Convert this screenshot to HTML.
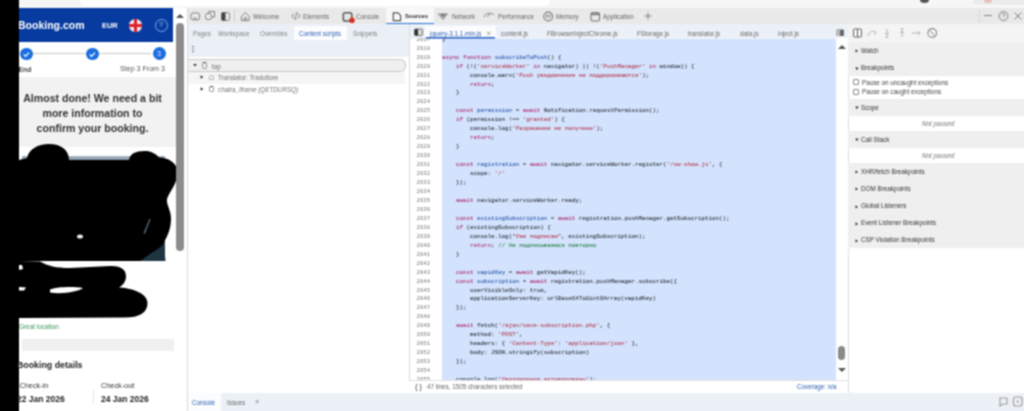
<!DOCTYPE html>
<html><head><meta charset="utf-8">
<style>
*{margin:0;padding:0;box-sizing:border-box}
html,body{width:1024px;height:411px;overflow:hidden;background:#fff;font-family:"Liberation Sans",sans-serif}
.a{position:absolute}
.t{position:absolute;white-space:pre;font-size:6.3px;color:#666;line-height:1}
#code{-webkit-text-stroke:0.12px currentColor;position:absolute;left:33px;top:0;font-family:"Liberation Mono",monospace;font-size:5.85px;line-height:9px;white-space:pre;color:#3c414c}
#nums{position:absolute;left:0px;top:0;width:21px;font-family:"Liberation Mono",monospace;font-size:5.6px;line-height:9px;white-space:pre;color:#7a7a7a;text-align:right}
.k{color:#b03a7a}.s{color:#b8485e}.v{color:#3a62b0}.c{color:#3a8a5a}
.sh{position:absolute;left:848px;width:176px;height:17px;background:#efefef}
</style></head><body><svg width="0" height="0" style="position:absolute"><filter id="bl" x="0" y="0" width="100%" height="100%" color-interpolation-filters="sRGB"><feConvolveMatrix order="3" kernelMatrix="1 2 1 2 4 2 1 2 1" divisor="16" edgeMode="duplicate"/></filter></svg><div id="root" style="position:absolute;left:0;top:0;width:1024px;height:411px;overflow:hidden;filter:url(#bl)">
<!-- top strip -->
<div class="a" style="left:0;top:0;width:1024px;height:8px;background:#f6f6f6"></div>
<div class="a" style="left:80px;top:0;width:470px;height:6px;background:#fff;border-radius:0 0 6px 6px"></div>
<div class="a" style="left:920px;top:-3px;width:9px;height:6px;border-radius:50%;background:#555"></div>
<div class="a" style="left:973px;top:-4px;width:60px;height:9px;border-radius:5px;background:#ececec"></div>
<div class="a" style="left:984px;top:-2px;width:8px;height:5px;border-radius:50%;background:#e8c0b8"></div>

<!-- booking page -->
<div class="a" style="left:19px;top:8px;width:169px;height:403px;background:#fff"></div>
<div class="a" style="left:19px;top:8px;width:154px;height:34px;background:#073b9f"></div>
<div class="t" style="left:18px;top:19.8px;font-size:10.5px;font-weight:700;color:#fff">Booking.com</div>
<div class="t" style="left:102px;top:21.8px;font-size:7.4px;font-weight:700;color:#fff">EUR</div>
<div class="a" style="left:129px;top:19px;width:12.5px;height:12.5px;border-radius:50%;background:#f6dde0;overflow:hidden">
  <div class="a" style="left:4.5px;top:0;width:3.5px;height:13px;background:#dc2430"></div>
  <div class="a" style="left:0;top:4.5px;width:13px;height:3.5px;background:#dc2430"></div>
</div>
<div class="a" style="left:154.5px;top:18.5px;width:13.5px;height:13.5px;border-radius:50%;border:1.6px solid #80aaf2"></div>
<div class="t" style="left:158.8px;top:21px;font-size:8px;color:#a9c5f4">?</div>

<!-- steps -->
<div class="a" style="left:33px;top:53px;width:52px;height:1px;background:#c8c8c8"></div>
<div class="a" style="left:99px;top:53px;width:52px;height:1px;background:#c8c8c8"></div>
<div class="a" style="left:20px;top:47.5px;width:12.5px;height:12.5px;border-radius:50%;background:#1a6ee0"></div>
<div class="a" style="left:86px;top:47.5px;width:12.5px;height:12.5px;border-radius:50%;background:#1a6ee0"></div>
<div class="a" style="left:152.5px;top:47px;width:13px;height:13px;border-radius:50%;background:#1a6ee0"></div>
<svg class="a" style="left:20px;top:47.5px" width="13" height="13"><path d="M3.8 6.5 L5.6 8.3 L9 4.6" stroke="#fff" stroke-width="1.2" fill="none"/></svg>
<svg class="a" style="left:86px;top:47.5px" width="13" height="13"><path d="M3.8 6.5 L5.6 8.3 L9 4.6" stroke="#fff" stroke-width="1.2" fill="none"/></svg>
<div class="t" style="left:157px;top:49.5px;font-size:7px;color:#dce8fb">3</div>
<div class="t" style="left:18.5px;top:66.5px;font-size:6.8px;font-weight:700;color:#444">End</div>
<div class="t" style="left:120px;top:66px;font-size:7.1px;color:#555">Step 3 From 3</div>

<!-- almost done box -->
<div class="a" style="left:19px;top:77px;width:157px;height:70px;background:#f2f2f2"></div>
<div class="a" style="left:9px;top:91px;width:167px;text-align:center;font-size:10.6px;font-weight:700;color:#333;line-height:15px">Almost done! We need a bit<br>more information to<br>confirm your booking.</div>

<!-- photo + scribble -->
<div class="a" style="left:22px;top:155.5px;width:143px;height:105.5px;background:linear-gradient(#a9b8c6,#3a5060 12%,#1f3441)"></div>
<svg class="a" style="left:0;top:0" width="188" height="411">
  <g fill="#000">
    <rect x="0" y="0" width="19" height="411"/>
    <path d="M19 160 L27 158 C29 149 38 144 49 144 C61 144 69 150 69 160 L129 160 C130 153 137 150.5 147 151 C152 151.5 156 154 159 157.5 C166 157 177.5 162 177.5 172 C177.5 184 170 190 167 199 C166 205 171.5 210 171 220 C170.5 232 166 238 163 244 L165 261 L19 261 Z"/>
    <path d="M19 261 L40 261.5 C48 266 56 268 70 268 L110 266 C121 265.5 126.5 270 126 277 C125.5 282 123 285 119 287.5 C128 287.5 147.5 292 147.5 303 C147.5 313 139 317.5 125 317.5 L19 318 Z"/>
  </g>
  <g fill="#fff">
    <path d="M50 289.5 C58 286.5 74 286.5 83 288 C79 291.5 62 294.5 50 292.5 Z"/>
    <path d="M19 287 L26 287.5 L24 290.5 L19 290.5 Z"/>
    <path d="M19 265 L22 265 L23 269 L19 270 Z"/>
  </g>
  <path d="M150 254 C156 250 161 247 164 244 L165.5 261 L140 261 Z" fill="#1f3441"/>
  <ellipse cx="80" cy="236.5" rx="3" ry="2" fill="#e8eef2"/>
  <path d="M143.5 233 L149.5 218.5 L150.5 219.5 L145 234 Z" fill="#8aa0b0" opacity="0.6"/>
</svg>

<div class="t" style="left:19px;top:324px;font-size:6.4px;color:#3a9a5a">Great location</div>
<div class="a" style="left:22px;top:339px;width:152px;height:12px;background:#f0f0f0"></div>
<div class="t" style="left:17px;top:360.5px;font-size:8.8px;font-weight:700;color:#222">Booking details</div>
<div class="t" style="left:19.5px;top:382px;font-size:7.3px;color:#333">Check-in</div>
<div class="t" style="left:101px;top:382px;font-size:7.3px;color:#333">Check-out</div>
<div class="t" style="left:17px;top:395px;font-size:8.5px;font-weight:700;color:#222">22 Jan 2026</div>
<div class="t" style="left:101px;top:395px;font-size:8.5px;font-weight:700;color:#222">24 Jan 2026</div>
<div class="a" style="left:93px;top:390px;width:1px;height:14px;background:#e4e4e4"></div>

<!-- page scrollbar -->
<div class="a" style="left:176px;top:23px;width:8px;height:228px;border-radius:4px;background:#8c8c8c"></div>
<svg class="a" style="left:175px;top:13px" width="10" height="6"><path d="M1 5 L5 1 L9 5Z" fill="#555"/></svg>

<!-- ============ DEVTOOLS ============ -->
<div class="a" style="left:187px;top:8px;width:837px;height:403px;background:#fff;border-left:1px solid #d8d8d8"></div>
<!-- main tab bar -->
<div class="a" style="left:188px;top:8px;width:836px;height:16px;background:#e9e9e9"></div>
<div class="a" style="left:386px;top:8px;width:48px;height:16px;background:#f8f8f8"></div>
<div class="a" style="left:386px;top:22.5px;width:48px;height:1.5px;background:#2d74d6"></div>


<!-- main tab icons -->
<svg class="a" style="left:188px;top:8px" width="836" height="16" viewBox="188 8 836 16">
 <g fill="none" stroke="#777" stroke-width="0.9">
  <rect x="191" y="13" width="8.5" height="6.8" rx="1.8"/>
  <path d="M193.5 19.5 L195 17.5 L196.5 19.5"/>
  <rect x="205.5" y="13.5" width="6" height="6" rx="2"/>
  <path d="M208.5 13.5 L208.5 11.5 L214.5 11.5 L214.5 17 L211.5 17"/>
  <rect x="221.5" y="12.5" width="8" height="8" rx="2"/>
  <path d="M241.5 16.5 L245.3 12.5 L249.1 16.5 L249.1 20.5 L241.5 20.5 Z M244.3 20.5 L244.3 17.8 L246.3 17.8 L246.3 20.5"/>
  <path d="M292 16 L294 13.5 M292 16 L294 18.5 M300 16 L298 13.5 M300 16 L298 18.5 M297 12 L295 20"/>
  <path d="M393.3 12.8 L398 12.8 L400.6 15.4 L400.6 20.6 L393.3 20.6 Z" stroke="#555" stroke-width="1.2"/>
  <path d="M438.5 14 L447.5 14 L443 19.5 Z"/>
  <path d="M484 17 C485 13 491 12 494 15 M487 17 L490 14"/>
  <circle cx="548.2" cy="16.5" r="4.4" stroke-width="1.1"/><path d="M546.5 18.5 L546.5 14.5 L548.2 16.5 L549.9 14.5 L549.9 18.5" stroke-width="0.8"/>
  <rect x="591" y="12.5" width="8.5" height="8.5" rx="1.8" stroke-width="1.1"/><path d="M591 14.3 L599.5 14.3" stroke-width="1.8"/>
  <path d="M644.5 16 L651.5 16 M648 12.5 L648 19.5"/>
  <path d="M984 15.5 L992 15.5"/>
  <circle cx="1003.5" cy="16" r="4.5"/><path d="M1002 14.8 C1002 13 1005 13 1005 14.8 C1005 16 1003.5 16 1003.5 17.2"/>
  <path d="M1014.5 12.5 L1021.5 19.5 M1021.5 12.5 L1014.5 19.5"/>
 </g>
 <rect x="221.5" y="12.5" width="4" height="8" fill="#444"/>
 <rect x="234" y="10" width="1" height="12" fill="#d0d0d0"/>
 <rect x="979" y="10" width="1" height="12" fill="#d8d8d8"/>
 <rect x="343.3" y="12.7" width="8.5" height="8.3" rx="1.8" fill="#e4e4e4" stroke="#5a5a5a" stroke-width="1.5"/><circle cx="352" cy="20.2" r="2.8" fill="#d93025"/>
 <path d="M440 14 L446 14 L443 18 Z" fill="#777"/>
</svg>
<div class="t" style="left:253px;top:13.5px">Welcome</div>
<div class="t" style="left:303px;top:13.5px">Elements</div>
<div class="t" style="left:356px;top:13.5px">Console</div>
<div class="t" style="left:405px;top:13.8px;color:#2a2a2a;font-size:5.8px;font-weight:700">Sources</div>
<div class="t" style="left:452px;top:13.5px">Network</div>
<div class="t" style="left:498px;top:13.5px">Performance</div>
<div class="t" style="left:556px;top:13.5px">Memory</div>
<div class="t" style="left:603px;top:13.5px">Application</div>


<!-- navigator -->
<div class="a" style="left:188px;top:24px;width:221px;height:32.5px;background:#ebf0f7"></div>
<div class="a" style="left:294px;top:26px;width:53px;height:14px;background:#fbfcfe"></div>
<div class="t" style="left:193px;top:30.5px;color:#808080">Pages</div>
<div class="t" style="left:218px;top:30.5px;color:#808080">Workspace</div>
<div class="t" style="left:260px;top:30.5px;color:#808080">Overrides</div>
<div class="t" style="left:299px;top:30.5px;color:#2a5db0">Content scripts</div>
<div class="t" style="left:353px;top:30.5px;color:#808080">Snippets</div>
<div class="a" style="left:192px;top:45.5px;width:1.5px;height:1.5px;background:#777;box-shadow:0 2.6px #777,0 5.2px #777"></div>
<div class="a" style="left:188px;top:59.3px;width:218px;height:12.6px;background:#efefef;border:1.2px solid #c8c8c8;border-left:none;border-radius:0 6px 6px 0"></div>
<div class="a" style="left:188px;top:72px;width:217px;height:11.5px;background:#f5f5f5"></div>
<svg class="a" style="left:192px;top:62px" width="6" height="6"><path d="M1.2 2 L4.8 2 L3 4.6Z" fill="#333"/></svg>
<div class="a" style="left:201.8px;top:62.4px;width:5.6px;height:6.8px;border:0.9px solid #999;border-top:1.6px solid #444;border-radius:2px"></div>
<div class="t" style="left:212px;top:63.6px;color:#666">top</div>
<svg class="a" style="left:199px;top:74px" width="6" height="6"><path d="M1.6 1.2 L4.4 3 L1.6 4.8Z" fill="#333"/></svg>
<div class="a" style="left:208.6px;top:74.5px;width:5.8px;height:5.5px;border:0.9px solid #bbb;border-radius:3px 3px 1px 1px"></div>
<div class="t" style="left:218px;top:75px;color:#707070">Translator: Traduttore</div>
<svg class="a" style="left:199px;top:85.8px" width="6" height="6"><path d="M1.6 1.2 L4.4 3 L1.6 4.8Z" fill="#333"/></svg>
<div class="a" style="left:208.6px;top:85.5px;width:5.6px;height:6.5px;border:0.9px solid #999;border-top:1.6px solid #444;border-radius:2px"></div>
<div class="t" style="left:218px;top:86.5px;color:#707070;font-style:italic">chatra_iframe (QETDURSQ)</div>

<!-- editor -->
<div class="a" style="left:409px;top:24px;width:439px;height:15px;background:#ecf1f8"></div>
<div class="a" style="left:409px;top:24px;width:1px;height:369px;background:#dcdcdc"></div>
<div class="a" style="left:442px;top:39px;width:394px;height:341px;background:#d3e3fd"></div>
<div class="a" style="left:836px;top:38px;width:12px;height:342px;background:#fff"></div>
<div class="a" style="left:409px;top:380px;width:439px;height:13px;background:#fff;border-top:1px solid #e0e0e0"></div>


<div class="a" style="left:424.5px;top:25.5px;width:71px;height:12.5px;background:#fbfcfe"></div>
<svg class="a" style="left:409px;top:24px" width="439" height="15" viewBox="409 24 439 15">
 <rect x="414.5" y="29" width="8" height="6.5" rx="1.2" fill="#d8d8d8" stroke="#555" stroke-width="0.8"/>
 <rect x="414.5" y="29" width="3.5" height="6.5" rx="1" fill="#333"/>
 <rect x="836.5" y="29.5" width="7.5" height="6.5" rx="1" fill="#666"/>
 <rect x="836.5" y="29.5" width="3.5" height="6.5" fill="#bbb"/>
 <rect x="426" y="37" width="69" height="1.6" fill="#2d63c8"/>
 <path d="M486.8 31.5 L490.6 35.3 M490.6 31.5 L486.8 35.3" stroke="#888" stroke-width="0.8"/>
</svg>
<div class="t" style="left:430px;top:31px;color:#2a5db0">jquery-3.1.1.min.js</div>
<div class="t" style="left:501px;top:31px">content.js</div>
<div class="t" style="left:547px;top:31px">FBrowserInjectChrome.js</div>
<div class="t" style="left:637px;top:31px">FStorage.js</div>
<div class="t" style="left:688px;top:31px">translator.js</div>
<div class="t" style="left:740px;top:31px">data.js</div>
<div class="t" style="left:778px;top:31px">inject.js</div>
<svg class="a" style="left:837px;top:44px" width="10" height="6"><path d="M1 5 L5 1 L9 5Z" fill="#555"/></svg>
<div class="a" style="left:838px;top:346px;width:7px;height:14px;border-radius:3.5px;background:#8a8a8a"></div>
<svg class="a" style="left:837px;top:367px" width="10" height="6"><path d="M1 1 L5 5 L9 1Z" fill="#555"/></svg>
<div class="t" style="left:415px;top:384px;font-size:7.5px;color:#444;top:382.5px">{ }</div>
<div class="t" style="left:427px;top:384px">47 lines, 1505 characters selected</div>
<div class="t" style="left:797px;top:384px;color:#2a5db0">Coverage: n/a</div>

<div class="a" style="left:409px;top:38px;width:427px;height:342px;overflow:hidden"><div id="nums"><div style="position:absolute;right:0;top:-3.27px">2617</div><div style="position:absolute;right:0;top:5.69px">2618</div><div style="position:absolute;right:0;top:14.65px">2619</div><div style="position:absolute;right:0;top:23.60px">2620</div><div style="position:absolute;right:0;top:32.56px">2621</div><div style="position:absolute;right:0;top:41.51px">2622</div><div style="position:absolute;right:0;top:50.47px">2623</div><div style="position:absolute;right:0;top:59.43px">2624</div><div style="position:absolute;right:0;top:68.38px">2625</div><div style="position:absolute;right:0;top:77.34px">2626</div><div style="position:absolute;right:0;top:86.29px">2627</div><div style="position:absolute;right:0;top:95.25px">2628</div><div style="position:absolute;right:0;top:104.21px">2629</div><div style="position:absolute;right:0;top:113.16px">2630</div><div style="position:absolute;right:0;top:122.12px">2631</div><div style="position:absolute;right:0;top:131.07px">2632</div><div style="position:absolute;right:0;top:140.03px">2633</div><div style="position:absolute;right:0;top:148.99px">2634</div><div style="position:absolute;right:0;top:157.94px">2635</div><div style="position:absolute;right:0;top:166.90px">2636</div><div style="position:absolute;right:0;top:175.85px">2637</div><div style="position:absolute;right:0;top:184.81px">2638</div><div style="position:absolute;right:0;top:193.77px">2639</div><div style="position:absolute;right:0;top:202.72px">2640</div><div style="position:absolute;right:0;top:211.68px">2641</div><div style="position:absolute;right:0;top:220.63px">2642</div><div style="position:absolute;right:0;top:229.59px">2643</div><div style="position:absolute;right:0;top:238.55px">2644</div><div style="position:absolute;right:0;top:247.50px">2645</div><div style="position:absolute;right:0;top:256.46px">2646</div><div style="position:absolute;right:0;top:265.41px">2647</div><div style="position:absolute;right:0;top:274.37px">2648</div><div style="position:absolute;right:0;top:283.33px">2649</div><div style="position:absolute;right:0;top:292.28px">2650</div><div style="position:absolute;right:0;top:301.24px">2651</div><div style="position:absolute;right:0;top:310.19px">2652</div><div style="position:absolute;right:0;top:319.15px">2653</div><div style="position:absolute;right:0;top:328.11px">2654</div><div style="position:absolute;right:0;top:337.06px">2655</div><div style="position:absolute;right:0;top:346.02px">2656</div></div><div id="code"><div style="position:absolute;left:0;top:-3.27px">}</div><div style="position:absolute;left:0;top:5.69px"></div><div style="position:absolute;left:0;top:14.65px"><span class="k">async</span> <span class="k">function</span> <span class="v">subscribeToPush</span>() {</div><div style="position:absolute;left:0;top:23.60px">    <span class="k">if</span> (!(<span class="s">&#x27;serviceWorker&#x27;</span> <span class="k">in</span> navigator) || !(<span class="s">&#x27;PushManager&#x27;</span> <span class="k">in</span> window)) {</div><div style="position:absolute;left:0;top:32.56px">        console.warn(<span class="s">&#x27;Push уведомления не поддерживаются&#x27;</span>);</div><div style="position:absolute;left:0;top:41.51px">        <span class="k">return</span>;</div><div style="position:absolute;left:0;top:50.47px">    }</div><div style="position:absolute;left:0;top:59.43px"></div><div style="position:absolute;left:0;top:68.38px">    <span class="k">const</span> <span class="v">permission</span> = <span class="k">await</span> Notification.requestPermission();</div><div style="position:absolute;left:0;top:77.34px">    <span class="k">if</span> (permission !== <span class="s">&#x27;granted&#x27;</span>) {</div><div style="position:absolute;left:0;top:86.29px">        console.log(<span class="s">&#x27;Разрешение не получено&#x27;</span>);</div><div style="position:absolute;left:0;top:95.25px">        <span class="k">return</span>;</div><div style="position:absolute;left:0;top:104.21px">    }</div><div style="position:absolute;left:0;top:113.16px"></div><div style="position:absolute;left:0;top:122.12px">    <span class="k">const</span> <span class="v">registration</span> = <span class="k">await</span> navigator.serviceWorker.register(<span class="s">&#x27;/sw-show.js&#x27;</span>, {</div><div style="position:absolute;left:0;top:131.07px">        scope: <span class="s">&#x27;/&#x27;</span></div><div style="position:absolute;left:0;top:140.03px">    });</div><div style="position:absolute;left:0;top:148.99px"></div><div style="position:absolute;left:0;top:157.94px">    <span class="k">await</span> navigator.serviceWorker.ready;</div><div style="position:absolute;left:0;top:166.90px"></div><div style="position:absolute;left:0;top:175.85px">    <span class="k">const</span> <span class="v">existingSubscription</span> = <span class="k">await</span> registration.pushManager.getSubscription();</div><div style="position:absolute;left:0;top:184.81px">    <span class="k">if</span> (existingSubscription) {</div><div style="position:absolute;left:0;top:193.77px">        console.log(<span class="s">&quot;Уже подписан&quot;</span>, existingSubscription);</div><div style="position:absolute;left:0;top:202.72px">        <span class="k">return</span>; <span class="c">// Не подписываемся повторно</span></div><div style="position:absolute;left:0;top:211.68px">    }</div><div style="position:absolute;left:0;top:220.63px"></div><div style="position:absolute;left:0;top:229.59px">    <span class="k">const</span> <span class="v">vapidKey</span> = <span class="k">await</span> getVapidKey();</div><div style="position:absolute;left:0;top:238.55px">    <span class="k">const</span> <span class="v">subscription</span> = <span class="k">await</span> registration.pushManager.subscribe({</div><div style="position:absolute;left:0;top:247.50px">        userVisibleOnly: true,</div><div style="position:absolute;left:0;top:256.46px">        applicationServerKey: urlBase64ToUint8Array(vapidKey)</div><div style="position:absolute;left:0;top:265.41px">    });</div><div style="position:absolute;left:0;top:274.37px"></div><div style="position:absolute;left:0;top:283.33px">    <span class="k">await</span> fetch(<span class="s">&#x27;/ajax/save-subscription.php&#x27;</span>, {</div><div style="position:absolute;left:0;top:292.28px">        method: <span class="s">&#x27;POST&#x27;</span>,</div><div style="position:absolute;left:0;top:301.24px">        headers: { <span class="s">&#x27;Content-Type&#x27;</span>: <span class="s">&#x27;application/json&#x27;</span> },</div><div style="position:absolute;left:0;top:310.19px">        body: JSON.stringify(subscription)</div><div style="position:absolute;left:0;top:319.15px">    });</div><div style="position:absolute;left:0;top:328.11px"></div><div style="position:absolute;left:0;top:337.06px">    console.log(<span class="s">&#x27;Уведомления активированы&#x27;</span>);</div><div style="position:absolute;left:0;top:346.02px">}</div></div><!--endcode--></div>

<!-- sidebar -->
<div class="a" style="left:848px;top:24px;width:176px;height:369px;background:#fff;border-left:1px solid #dedede"></div>
<div class="a" style="left:848px;top:24px;width:176px;height:17.5px;background:#f4f4f4"></div>

<svg class="a" style="left:848px;top:24px" width="176" height="17" viewBox="848 24 176 17">
 <g fill="none" stroke="#666" stroke-width="1">
  <rect x="853.5" y="29" width="8" height="8" rx="1"/>
  <path d="M857.5 29 L857.5 37"/>
  <circle cx="932.2" cy="33" r="4.4" stroke="#8a8a8a" stroke-width="1.1"/>
  <path d="M929.2 30 L935.2 36" stroke="#8a8a8a"/>
 </g>
 <g fill="none" stroke="#aaa" stroke-width="0.9">
  <path d="M868 36 C869 31 874 30 876 33 M874 31 L876 33 L874 35"/>
  <path d="M887 29 L887 35 M885 33 L887 35 L889 33"/><circle cx="887" cy="37" r="0.8"/>
  <path d="M902 37 L902 31 M900 33 L902 31 L904 33"/><circle cx="902" cy="29" r="0.8"/>
  <path d="M912 33 L920 33 M918 31 L920 33 L918 35"/>
 </g>
</svg>
<div class="sh" style="top:41.5px"></div><svg class="a" style="left:854px;top:48px" width="6" height="6"><path d="M1.5 1.2 L4.1 2.9 L1.5 4.6Z" fill="#333"/></svg><div class="t" style="left:861px;top:48px;color:#333">Watch</div><div class="sh" style="top:59px"></div><svg class="a" style="left:854px;top:65.5px" width="6" height="6"><path d="M1.2 1.6 L4.6 1.6 L2.9 4.2Z" fill="#333"/></svg><div class="t" style="left:861px;top:65.3px;color:#333">Breakpoints</div>
<div class="a" style="left:852.5px;top:79px;width:6px;height:6px;border:0.8px solid #888;border-radius:1px;background:#fff"></div>
<div class="t" style="left:862px;top:79.5px;color:#444">Pause on uncaught exceptions</div>
<div class="a" style="left:852.5px;top:88.5px;width:6px;height:6px;border:0.8px solid #888;border-radius:1px;background:#fff"></div>
<div class="t" style="left:862px;top:89px;color:#444">Pause on caught exceptions</div>
<div class="sh" style="top:98.5px"></div><svg class="a" style="left:854px;top:105.3px" width="6" height="6"><path d="M1.2 1.6 L4.6 1.6 L2.9 4.2Z" fill="#333"/></svg><div class="t" style="left:861px;top:105px;color:#333">Scope</div>
<div class="t" style="left:922px;top:121px;font-style:italic;color:#777">Not paused</div>
<div class="sh" style="top:131px"></div><svg class="a" style="left:854px;top:137px" width="6" height="6"><path d="M1.2 1.6 L4.6 1.6 L2.9 4.2Z" fill="#333"/></svg><div class="t" style="left:861px;top:136.8px;color:#333">Call Stack</div>
<div class="t" style="left:922px;top:152.5px;font-style:italic;color:#777">Not paused</div>
<div class="a" style="left:848px;top:163px;width:176px;height:85px;background:#efefef"></div>
<svg class="a" style="left:854px;top:169.0px" width="6" height="6"><path d="M1.5 1.2 L4.1 2.9 L1.5 4.6Z" fill="#333"/></svg><div class="t" style="left:861px;top:168.7px;color:#333">XHR/fetch Breakpoints</div><svg class="a" style="left:854px;top:186.0px" width="6" height="6"><path d="M1.5 1.2 L4.1 2.9 L1.5 4.6Z" fill="#333"/></svg><div class="t" style="left:861px;top:185.7px;color:#333">DOM Breakpoints</div><svg class="a" style="left:854px;top:203.5px" width="6" height="6"><path d="M1.5 1.2 L4.1 2.9 L1.5 4.6Z" fill="#333"/></svg><div class="t" style="left:861px;top:203.2px;color:#333">Global Listeners</div><svg class="a" style="left:854px;top:220.5px" width="6" height="6"><path d="M1.5 1.2 L4.1 2.9 L1.5 4.6Z" fill="#333"/></svg><div class="t" style="left:861px;top:220.2px;color:#333">Event Listener Breakpoints</div><svg class="a" style="left:854px;top:237.5px" width="6" height="6"><path d="M1.5 1.2 L4.1 2.9 L1.5 4.6Z" fill="#333"/></svg><div class="t" style="left:861px;top:237.2px;color:#333">CSP Violation Breakpoints</div>


<!-- drawer -->
<div class="a" style="left:188px;top:393px;width:836px;height:18px;background:#ecf0f7"></div>
<div class="a" style="left:188px;top:393px;width:33px;height:18px;background:#fbfcfe"></div>
<div class="t" style="left:192px;top:400px;color:#2a5db0">Console</div>
<div class="t" style="left:227px;top:400px">Issues</div>
<div class="t" style="left:254.5px;top:397.5px;font-size:9px;color:#888">+</div>

<svg class="a" style="left:995px;top:394px" width="29" height="14">
 <g fill="none" stroke="#a0a0a0" stroke-width="1.2">
  <path d="M5 4 L12 4 L12 10 L8 10 L5 12 Z"/>
  <rect x="18.5" y="3" width="8.5" height="9" rx="2.2"/>
  <path d="M22.7 6 L22.7 9"/>
 </g>
</svg>
</div></body></html>
